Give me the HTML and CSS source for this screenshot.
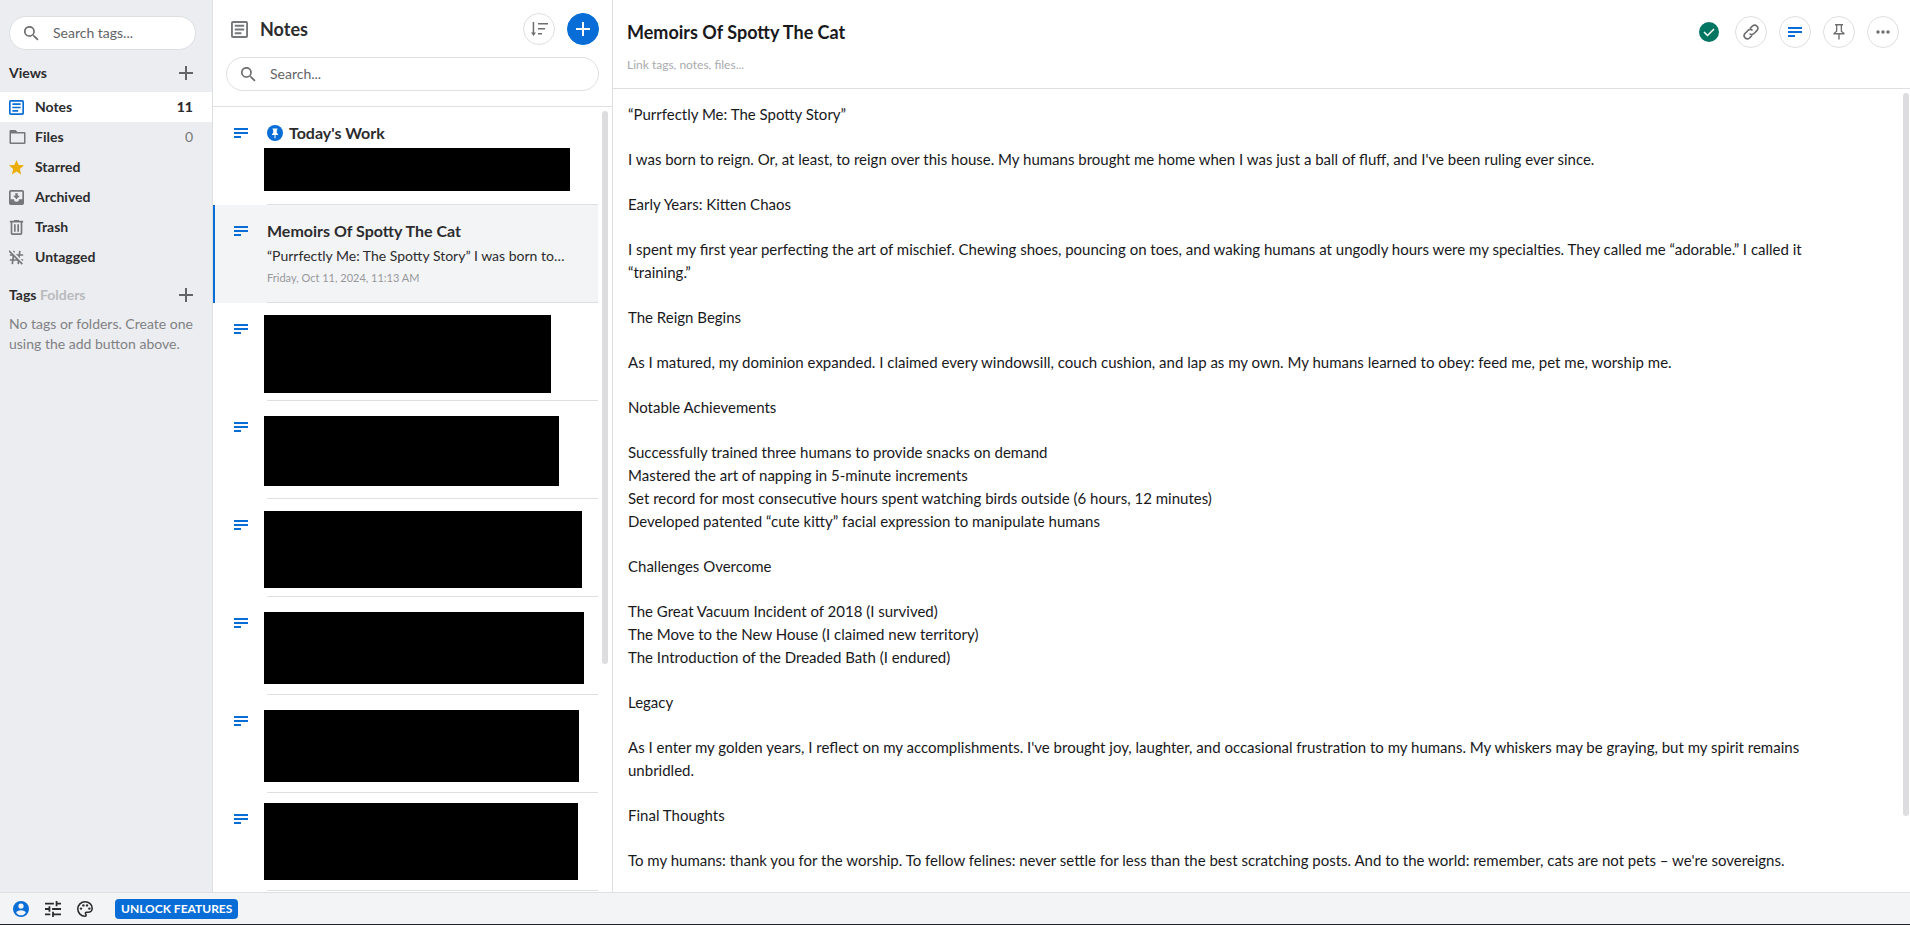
FILE: index.html
```
<!DOCTYPE html>
<html lang="en">
<head>
  <meta charset="UTF-8">
  <title>Notes</title>
  <link rel="stylesheet" href="styles.css">
</head>
<body>

<!-- shared icons -->
<svg class="sprite" aria-hidden="true">
  <symbol id="i-search" viewBox="0 0 18 18"><path d="M12.500 11h-.8l-.3-.3a6.500 6.500 0 1 0-.7.7l.3.3v.8l5 5 1.500-1.500zm-6 0a4.500 4.500 0 1 1 0-9 4.500 4.500 0 0 1 0 9z"/></symbol>
  <symbol id="i-plus" viewBox="0 0 14 14"><path d="M6 0h2v6h6v2H8v6H6V8H0V6h6z"/></symbol>
  <symbol id="i-note" viewBox="0 0 18 18"><path fill-rule="evenodd" d="M2 0h14a2 2 0 0 1 2 2v14a2 2 0 0 1-2 2H2a2 2 0 0 1-2-2V2a2 2 0 0 1 2-2zm0 2v14h14V2zM4 4h10v2H4zm0 4h10v2H4zm0 4h7v2H4z"/></symbol>
  <symbol id="i-text" viewBox="0 0 14 10"><path d="M0 0h14v2H0zm0 4h14v2H0zm0 4h7v2H0z"/></symbol>
</svg>

<div class="app">
  <div class="panels">

    <nav class="sidebar">
      <label class="search">
        <svg><use href="#i-search"/></svg>
        <input type="text" placeholder="Search tags..." aria-label="Search tags">
      </label>

      <div class="section-head">
        <h2>Views</h2>
        <button class="add" aria-label="Add view"><svg><use href="#i-plus"/></svg></button>
      </div>
      <ul class="views">
        <li><a class="active" href="#"><svg class="blue"><use href="#i-note"/></svg><span>Notes</span><b>11</b></a></li>
        <li><a href="#"><svg class="folder" viewBox="0 0 16 14"><path fill-rule="evenodd" d="M1 0h5l2 2h7a1 1 0 0 1 1 1v10a1 1 0 0 1-1 1H1a1 1 0 0 1-1-1V1a1 1 0 0 1 1-1zm.5 3.500v9h13v-9z"/></svg><span>Files</span><i>0</i></a></li>
        <li><a href="#"><svg class="star" viewBox="0 0 24 24"><path d="M12 18.300 19.400 23l-2-8.700L24 8.500l-8.600-.7L12 0 8.600 7.800 0 8.500l6.600 5.800-2 8.700z"/></svg><span>Starred</span></a></li>
        <li><a href="#"><svg viewBox="0 0 18 18"><path fill-rule="evenodd" d="M2 0h14a2 2 0 0 1 2 2v14a2 2 0 0 1-2 2H2a2 2 0 0 1-2-2V2a2 2 0 0 1 2-2zm0 2v9h4a3 3 0 0 0 6 0h4V2zm5.500 2h3v3H13l-4 4-4-4h2.500z"/></svg><span>Archived</span></a></li>
        <li><a href="#"><svg viewBox="0 0 16 18"><path fill-rule="evenodd" d="M5 0h6v1h5v2h-1v13a2 2 0 0 1-2 2H3a2 2 0 0 1-2-2V3H0V1h5zM3 3v13h10V3zm2 2h2v9H5zm4 0h2v9H9z"/></svg><span>Trash</span></a></li>
        <li><a href="#"><svg viewBox="0 0 18 18"><path d="M6 1 4 17M13 1l-2 16M1 6h16M1 12h16" fill="none" stroke="currentColor" stroke-width="2"/><path d="m1 0 17 17" stroke="#ecedf0" stroke-width="3"/><path d="m0 1 16 16" stroke="currentColor" stroke-width="2"/></svg><span>Untagged</span></a></li>
      </ul>

      <div class="section-head">
        <h2>Tags <span>Folders</span></h2>
        <button class="add" aria-label="Add tag"><svg><use href="#i-plus"/></svg></button>
      </div>
      <p class="hint">No tags or folders. Create one using the add button above.</p>
    </nav>

    <section class="list">
      <header class="list-head">
        <div class="list-title">
          <svg><use href="#i-note"/></svg>
          <h1>Notes</h1>
          <button class="round" aria-label="Sort"><svg class="sort" viewBox="0 0 17 14"><path d="M1.700 0h1.500v10.500H5L2.500 14 0 10.500h1.700zM7 1h10v1.500H7zm0 5h7v1.500H7zm0 5h4v1.500H7z"/></svg></button>
          <button class="round primary" aria-label="New note"><svg class="plus"><use href="#i-plus"/></svg></button>
        </div>
        <label class="search">
          <svg><use href="#i-search"/></svg>
          <input type="text" placeholder="Search..." aria-label="Search notes">
        </label>
      </header>

      <ul class="items">
        <li class="item">
          <svg class="type"><use href="#i-text"/></svg>
          <div class="cell">
            <h3><svg class="pinned" viewBox="0 0 16 16"><circle cx="8" cy="8" r="8"/><path fill="#fff" d="M5.500 3.500h5v1h-.7V8l1.200 1v1H8.500v3l-.5.500-.5-.500v-3H5V9l1.200-1V4.500h-.7z"/></svg>Today's Work</h3>
            <div class="redacted r1"></div>
          </div>
        </li>
        <li class="item selected">
          <svg class="type"><use href="#i-text"/></svg>
          <div class="cell">
            <h3>Memoirs Of Spotty The Cat</h3>
            <p>“Purrfectly Me: The Spotty Story” I was born to…</p>
            <time>Friday, Oct 11, 2024, 11:13 AM</time>
          </div>
        </li>
        <li class="item"><svg class="type"><use href="#i-text"/></svg><div class="cell"><div class="redacted r2"></div></div></li>
        <li class="item"><svg class="type"><use href="#i-text"/></svg><div class="cell"><div class="redacted r3"></div></div></li>
        <li class="item"><svg class="type"><use href="#i-text"/></svg><div class="cell"><div class="redacted r4"></div></div></li>
        <li class="item"><svg class="type"><use href="#i-text"/></svg><div class="cell"><div class="redacted r5"></div></div></li>
        <li class="item"><svg class="type"><use href="#i-text"/></svg><div class="cell"><div class="redacted r6"></div></div></li>
        <li class="item"><svg class="type"><use href="#i-text"/></svg><div class="cell"><div class="redacted r7"></div></div></li>
      </ul>
      <div class="thumb list-thumb"></div>
    </section>

    <main class="editor">
      <header class="editor-head">
        <div class="titles">
          <h1>Memoirs Of Spotty The Cat</h1>
          <input type="text" placeholder="Link tags, notes, files..." aria-label="Link tags, notes, files">
        </div>
        <div class="actions">
          <button class="saved" aria-label="Saved"><svg viewBox="0 0 20 20"><path d="m5 10 3.500 3.500L15 7" fill="none" stroke="#fff" stroke-width="1.500"/></svg></button>
          <button class="round" aria-label="Linked items"><svg viewBox="0 0 16 16"><path d="M7 4.500 9.600 1.900a3.200 3.200 0 0 1 4.500 4.500L11 9.500a3.200 3.200 0 0 1-4.500 0M9 11.500l-2.600 2.600a3.200 3.200 0 0 1-4.500-4.500L5 6.500a3.200 3.200 0 0 1 4.500 0" fill="none" stroke="currentColor" stroke-width="1.600"/></svg></button>
          <button class="round blue" aria-label="Note type"><svg class="lines"><use href="#i-text"/></svg></button>
          <button class="round" aria-label="Pin"><svg viewBox="0 0 16 16"><path fill-rule="evenodd" d="M4 0h8v1.500h-1V7l2.500 2v1.500H8.700V15L8 16l-.7-1V10.500H2.500V9L5 7V1.500H4zm2.300 1.500v6L4.500 9h7L9.700 7.500v-6z"/></svg></button>
          <button class="round" aria-label="More"><svg viewBox="0 0 16 16"><circle cx="3" cy="8" r="1.700"/><circle cx="8" cy="8" r="1.700"/><circle cx="13" cy="8" r="1.700"/></svg></button>
        </div>
      </header>

      <article class="content">
        <p>“Purrfectly Me: The Spotty Story”</p>
        <p>I was born to reign. Or, at least, to reign over this house. My humans brought me home when I was just a ball of fluff, and I've been ruling ever since.</p>
        <p>Early Years: Kitten Chaos</p>
        <p>I spent my first year perfecting the art of mischief. Chewing shoes, pouncing on toes, and waking humans at ungodly hours were my specialties. They called me “adorable.” I called it “training.”</p>
        <p>The Reign Begins</p>
        <p>As I matured, my dominion expanded. I claimed every windowsill, couch cushion, and lap as my own. My humans learned to obey: feed me, pet me, worship me.</p>
        <p>Notable Achievements</p>
        <p>Successfully trained three humans to provide snacks on demand<br>Mastered the art of napping in 5-minute increments<br>Set record for most consecutive hours spent watching birds outside (6 hours, 12 minutes)<br>Developed patented “cute kitty” facial expression to manipulate humans</p>
        <p>Challenges Overcome</p>
        <p>The Great Vacuum Incident of 2018 (I survived)<br>The Move to the New House (I claimed new territory)<br>The Introduction of the Dreaded Bath (I endured)</p>
        <p>Legacy</p>
        <p>As I enter my golden years, I reflect on my accomplishments. I've brought joy, laughter, and occasional frustration to my humans. My whiskers may be graying, but my spirit remains unbridled.</p>
        <p>Final Thoughts</p>
        <p>To my humans: thank you for the worship. To fellow felines: never settle for less than the best scratching posts. And to the world: remember, cats are not pets – we're sovereigns.</p>
      </article>
      <div class="thumb editor-thumb"></div>
    </main>
  </div>

  <footer class="status">
    <button aria-label="Account" class="blue"><svg viewBox="0 0 20 20"><path fill-rule="evenodd" d="M10 0a10 10 0 1 1 0 20 10 10 0 0 1 0-20zm0 3a3.300 3.300 0 1 0 0 6.600A3.300 3.300 0 0 0 10 3zm0 8.500c-3 0-6 1.500-6 3.200a7.200 7.200 0 0 0 12 0c0-1.700-3-3.200-6-3.200z"/></svg></button>
    <button aria-label="Preferences"><svg viewBox="0 0 18 18"><path d="M0 14v2h6v-2zM0 2v2h10V2zm10 16v-2h8v-2h-8v-2H8v6zM4 6v2H0v2h4v2h2V6zm14 4V8H8v2zm-6-4h2V4h4V2h-4V0h-2z"/></svg></button>
    <button aria-label="Themes"><svg viewBox="0 0 20 20"><path d="M10 1c5 0 9 3.500 9 8 0 3-2.300 5-5 5h-2c-1.500 0-2 1.500-1 2.500 1 1.100.4 2.500-1 2.500a9 9 0 0 1 0-18z" fill="none" stroke="currentColor" stroke-width="2"/><circle cx="5" cy="9.500" r="1.500"/><circle cx="8" cy="5.500" r="1.500"/><circle cx="12.500" cy="5.500" r="1.500"/><circle cx="15.500" cy="9.500" r="1.500"/></svg></button>
    <button class="unlock">UNLOCK FEATURES</button>
  </footer>
</div>

</body>
</html>
```
FILE: styles.css
```
* { box-sizing: border-box; margin: 0; padding: 0; }
body {
  font-family: Lato, "Noto Sans", sans-serif;
  font-size: 14px;
  line-height: 20px;
  color: #2c2c2e;
  background: #fff;
}
ul { list-style: none; }
a { color: inherit; text-decoration: none; }
button { border: 0; background: none; font: inherit; color: inherit; cursor: pointer; }
input { border: 0; outline: 0; background: none; font: inherit; color: inherit; min-width: 0; }
input::placeholder { color: #646467; opacity: 1; }
svg { fill: currentColor; flex-shrink: 0; display: block; }
.sprite { position: absolute; width: 0; height: 0; }

.app { display: flex; flex-direction: column; height: 100vh; border-bottom: 1px solid #20222b; }
.panels { display: flex; flex: 1; min-height: 0; }
.blue { color: #086dd6; }

/* search boxes */
.search {
  display: flex;
  align-items: center;
  gap: 14px;
  height: 34px;
  padding: 0 14px;
  border: 1px solid #dddfe2;
  border-radius: 17px;
  background: #fff;
}
.search svg { width: 15px; height: 15px; color: #6e6e71; }
.search input { flex: 1; }

/* sidebar */
.sidebar {
  width: 213px;
  flex-shrink: 0;
  padding-top: 16px;
  background: #ecedf0;
  border-right: 1px solid #dddfe2;
}
.sidebar .search { margin: 0 16px 0 9px; }
.section-head {
  display: flex;
  align-items: center;
  justify-content: space-between;
  height: 38px;
  margin-top: 4px;
  padding: 0 19px 0 9px;
}
.section-head h2 { font-size: 14px; font-weight: 700; }
.section-head h2 span { color: #b9babd; }
.add { color: #646467; }
.add svg { width: 14px; height: 14px; }
.views a {
  display: grid;
  grid-template-columns: 26px 1fr auto;
  align-items: center;
  height: 30px;
  padding: 0 19px 0 9px;
  font-weight: 700;
}
.views a.active { background: #fff; }
.views svg { width: 15px; height: 15px; color: #76777a; }
.views svg.folder { width: 17px; height: 14px; }
.views svg.blue { color: #086dd6; }
.views svg.star { color: #ebad00; }
.views i { font-style: normal; font-weight: 400; color: #76777a; }
.hint { padding: 0 9px; color: #808184; }

/* notes list */
.list {
  position: relative;
  display: flex;
  flex-direction: column;
  width: 400px;
  flex-shrink: 0;
  border-right: 1px solid #dddfe2;
}
.list-head { padding: 13px 13px 15px; border-bottom: 1px solid #dddfe2; }
.list-title { display: flex; align-items: center; gap: 12px; padding-left: 5px; margin-bottom: 12px; }
.list-title > svg { width: 17px; height: 17px; color: #76777a; }
.list-title h1 { flex: 1; font-size: 18px; line-height: 24px; }
.round {
  display: flex;
  align-items: center;
  justify-content: center;
  width: 32px;
  height: 32px;
  border: 1px solid #dddfe2;
  border-radius: 50%;
  color: #6e6e71;
}
.round svg { width: 16px; height: 16px; }
.round.blue { color: #086dd6; }
.round.primary { background: #086dd6; border-color: #086dd6; color: #fff; }
.round svg.plus { width: 14px; height: 14px; }
.round svg.sort { width: 17px; height: 14px; }
.round svg.lines { width: 14px; height: 10px; }

.items { flex: 1; min-height: 0; overflow: hidden; }
.item { display: flex; height: 98px; margin-right: 14px; border-left: 2px solid transparent; }
.item.selected { background: #f3f4f6; border-left-color: #086dd6; }
.type { width: 14px; height: 10px; margin: 21px 19px 0; color: #086dd6; }
.cell { flex: 1; min-width: 0; padding-top: 12px; border-bottom: 1px solid #dddfe2; }
.item h3 { display: flex; align-items: center; gap: 6px; margin-top: 3px; font-size: 16px; line-height: 22px; }
.pinned { width: 16px; height: 16px; color: #086dd6; }
.item p {
  margin: 4px 24px 0 0;
  white-space: nowrap;
  overflow: hidden;
  text-overflow: ellipsis;
}
.item time { display: block; margin-top: 2px; font-size: 11px; color: #97989b; }
.redacted { background: #000; margin-left: -3px; }
.r1 { width: 306px; height: 43px; margin-top: 4px; }
.r2 { width: 287px; height: 78px; }
.r3 { width: 295px; height: 70px; margin-top: 3px; }
.r4 { width: 318px; height: 77px; }
.r5 { width: 320px; height: 72px; margin-top: 3px; }
.r6 { width: 315px; height: 72px; margin-top: 3px; }
.r7 { width: 314px; height: 77px; margin-top: -2px; }

/* scrollbar thumbs */
.thumb { position: absolute; right: 1px; width: 6px; border-radius: 3px; background: #dddddf; }
.list-thumb { top: 111px; right: 4px; height: 62%; }
.editor-thumb { top: 93px; height: 81%; }

/* editor */
.editor { position: relative; flex: 1; min-width: 0; }
.editor-head {
  display: flex;
  justify-content: space-between;
  padding: 16px 11px 13px 14px;
  border-bottom: 1px solid #dddfe2;
}
.titles { display: flex; flex-direction: column; flex: 1; gap: 7px; }
.titles h1 { font-size: 18px; line-height: 32px; color: #19191c; }
.titles input { font-size: 12px; line-height: 20px; height: 20px; }
.titles input::placeholder { color: #a9aaad; }
.actions { display: flex; align-items: center; gap: 12px; height: 32px; }
.saved { width: 20px; height: 20px; margin-right: 4px; border-radius: 50%; background: #007662; }
.content { padding: 14px 44px 0 15px; font-size: 15px; line-height: 23px; color: #19191c; }
.content p { margin-bottom: 22px; }

/* status bar */
.status {
  display: flex;
  align-items: center;
  gap: 16px;
  height: 32px;
  padding-left: 13px;
  background: #f3f4f6;
  border-top: 1px solid #dddfe2;
}
.status svg { width: 16px; height: 16px; }
.unlock {
  height: 20px;
  margin-left: 6px;
  padding: 0 6px;
  border-radius: 4px;
  background: #086dd6;
  color: #fff;
  font-size: 12px;
  font-weight: 700;
}
```
